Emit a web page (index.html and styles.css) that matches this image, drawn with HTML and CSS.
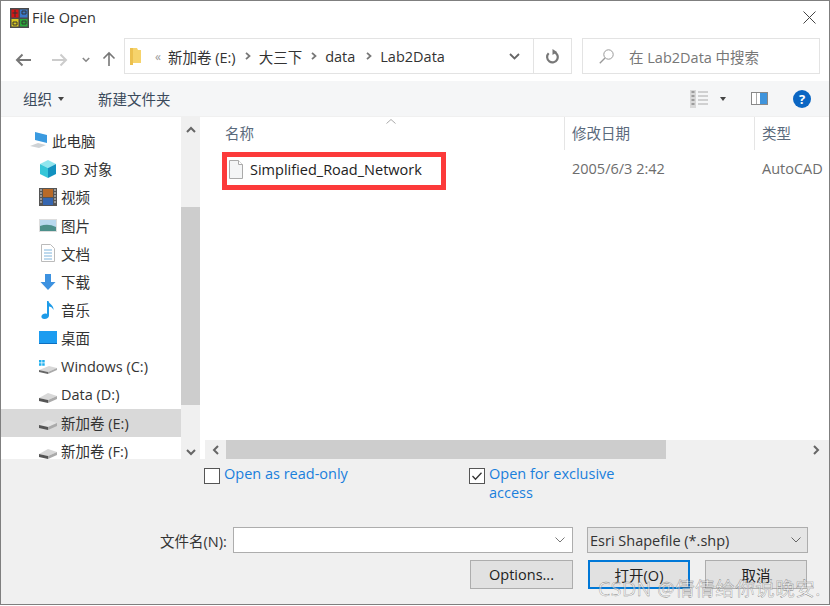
FILE: index.html
```html
<!DOCTYPE html>
<html lang="en">
<head>
    <meta charset="UTF-8">
    <meta name="viewport" content="width=device-width, initial-scale=1.0">
    <title>File Open</title>
    <link rel="stylesheet" href="styles.css">
</head>
<body>
<div class="window">
    <div class="titlebar">
        <svg class="app-icon" width="19" height="20" viewBox="0 0 19 20">
            <rect width="19" height="20" fill="#4a4a4a"/>
            <rect x="1.500" y="1.500" width="7" height="8" fill="#d81414"/>
            <rect x="10" y="1.500" width="7.500" height="8" fill="#3a78c8"/>
            <rect x="1.500" y="11" width="7" height="7.500" fill="#d8c820"/>
            <rect x="10" y="11" width="7.500" height="7.500" fill="#2aa83a"/>
            <path d="M5 2v7M2.500 5h5M3 14h4v3H3zM12 3h4v3h-4zM12 13h4v3h-4z" stroke="#333" fill="none"/>
        </svg>
        <span class="title">File Open</span>
        <svg class="close" width="13" height="13" viewBox="0 0 13 13"><path d="M.5.5l12 12M12.5.5l-12 12" stroke="#444" fill="none"/></svg>
    </div>

    <div class="navbar">
        <svg class="nav-back" width="17" height="14" viewBox="0 0 17 14"><path d="M16 7H2M7.500 1.500L2 7l5.500 5.500" stroke="#777" stroke-width="2" fill="none"/></svg>
        <svg class="nav-forward" width="17" height="14" viewBox="0 0 17 14"><path d="M1 7h14M9.500 1.500L15 7l-5.500 5.500" stroke="#ccc" stroke-width="2" fill="none"/></svg>
        <svg class="nav-down" width="8" height="6" viewBox="0 0 8 6"><path d="M.8 1l3.200 3.200L7.200 1" stroke="#888" stroke-width="1.600" fill="none"/></svg>
        <svg class="nav-up" width="14" height="15" viewBox="0 0 14 15"><path d="M7 15V2M1.500 7.500L7 2l5.500 5.500" stroke="#777" stroke-width="1.600" fill="none"/></svg>
        <div class="address">
            <svg class="folder" width="11" height="17" viewBox="0 0 11 17"><path d="M0 0h7l1 2h3v13l-9 0-2 2z" fill="#f6d36b"/><path d="M0 0h3v17H0z" fill="#ecc04e"/></svg>
            <span class="crumb-more">«</span>
            <span class="crumb">新加卷 (E:)</span>
            <svg class="crumb-sep" width="6" height="8" viewBox="0 0 6 8"><path d="M1 .8L4.500 4 1 7.200" stroke="#777" stroke-width="1.800" fill="none"/></svg>
            <span class="crumb">大三下</span>
            <svg class="crumb-sep" width="6" height="8" viewBox="0 0 6 8"><path d="M1 .8L4.500 4 1 7.200" stroke="#777" stroke-width="1.800" fill="none"/></svg>
            <span class="crumb crumb-data">data</span>
            <svg class="crumb-sep" width="6" height="8" viewBox="0 0 6 8"><path d="M1 .8L4.500 4 1 7.200" stroke="#777" stroke-width="1.800" fill="none"/></svg>
            <span class="crumb">Lab2Data</span>
            <svg class="address-drop" width="11" height="7" viewBox="0 0 11 7"><path d="M1 1l4.500 4.500L10 1" stroke="#666" stroke-width="1.800" fill="none"/></svg>
            <div class="refresh">
                <svg width="14" height="15" viewBox="0 0 14 15"><path d="M8 3a5.300 5.300 0 1 1-5.300 1.300" stroke="#777" stroke-width="2.200" fill="none"/><path d="M6.500 0v6L11 3z" fill="#777"/></svg>
            </div>
        </div>
        <div class="search">
            <svg width="15" height="15" viewBox="0 0 15 15"><circle cx="9.500" cy="5.500" r="4.700" stroke="#999" fill="none"/><path d="M6 9L.8 14.200" stroke="#999" stroke-width="1.300"/></svg>
            <span>在 Lab2Data 中搜索</span>
        </div>
    </div>

    <div class="toolbar">
        <span class="tool">组织</span>
        <span class="caret tool-caret"></span>
        <span class="tool tool-new">新建文件夹</span>
        <svg class="view-icon" width="18" height="18" viewBox="0 0 18 18">
            <rect x="0" y="0" width="6" height="18" fill="#d8d8d8"/>
            <path d="M1.500 2h3M1.500 6h3M1.500 10h3M1.500 14h3" stroke="#888" stroke-width="1.500"/>
            <path d="M8 2h10M8 6h10M8 10h10M8 14h10" stroke="#aaa"/>
        </svg>
        <span class="caret view-caret"></span>
        <svg class="pane-icon" width="17" height="13" viewBox="0 0 17 13">
            <rect x=".5" y=".5" width="16" height="12" fill="#fff" stroke="#888"/>
            <rect x="9" y="1" width="7" height="11" fill="#3f94dc"/>
            <path d="M5.500 1v11" stroke="#aaa"/>
        </svg>
        <span class="help">?</span>
    </div>

    <div class="content">
        <div class="sidebar">
            <div class="tree">
                <div class="row row-top">
                    <svg width="18" height="17" viewBox="0 0 18 17"><path d="M5 0l12 3v8L5 8z" fill="#3a9ae0"/><path d="M0 14l8-3 8 2-7 3z" fill="#cfd3d6"/></svg>
                    <span>此电脑</span>
                </div>
                <div class="row">
                    <svg width="18" height="18" viewBox="0 0 18 18"><path d="M9 0l8 4-8 4-8-4z" fill="#8fe6ee"/><path d="M1 4l8 4v10l-8-4z" fill="#35c6d8"/><path d="M17 4L9 8v10l8-4z" fill="#1292c0"/></svg>
                    <span>3D 对象</span>
                </div>
                <div class="row">
                    <svg width="18" height="18" viewBox="0 0 18 18"><rect width="18" height="18" fill="#555"/><rect x="4" y="1" width="10" height="8" fill="#b86a28"/><rect x="4" y="10" width="10" height="7" fill="#3566b0"/><path d="M1 2h2M1 5h2M1 8h2M1 11h2M1 14h2M15 2h2M15 5h2M15 8h2M15 11h2M15 14h2" stroke="#ddd"/></svg>
                    <span>视频</span>
                </div>
                <div class="row">
                    <svg width="18" height="13" viewBox="0 0 18 13"><rect width="18" height="13" fill="#ddd"/><rect x="1" y="1" width="16" height="11" fill="#b8d8ee"/><path d="M1 7q8-3 16 1v4H1z" fill="#4c8f8a"/></svg>
                    <span>图片</span>
                </div>
                <div class="row">
                    <svg width="14" height="18" viewBox="0 0 14 18"><path d="M.5.5h9l4 4v13H.5z" fill="#fff" stroke="#bbb"/><path d="M3 6h8M3 9h8M3 12h8M3 15h8" stroke="#7fb4dc"/></svg>
                    <span>文档</span>
                </div>
                <div class="row">
                    <svg width="15" height="16" viewBox="0 0 15 16"><path d="M4.500 0h6v8H15l-7.500 8L0 8h4.500z" fill="#3d92e0"/></svg>
                    <span>下载</span>
                </div>
                <div class="row">
                    <svg width="14" height="18" viewBox="0 0 14 18"><path d="M6 0h1.500c.3 3 5.500 4 5 9-1-2.500-3-3.500-4.500-3.500V14.500c0 2-2 3.500-4.500 3.500S0 16.500.5 15c.5-2 3.500-3 5.500-2z" fill="#1d9be8"/></svg>
                    <span>音乐</span>
                </div>
                <div class="row">
                    <svg width="18" height="13" viewBox="0 0 18 13"><rect width="18" height="13" fill="#1c9cf0"/><path d="M0 12.500h18" stroke="#0d6fc0"/></svg>
                    <span>桌面</span>
                </div>
                <div class="row row-latin">
                    <svg width="18" height="14" viewBox="0 0 18 14"><path d="M0 0h2.500v2.500H0zM3.200 0h2.500v2.500H3.200zM0 3.200h2.500v2.500H0zM3.200 3.200h2.500v2.500H3.200z" fill="#20b0ee"/><path d="M0 10l10-4 8 2-9 4z" fill="#d8d8d8"/><path d="M0 10l9 2v2l-9-2z" fill="#666"/><path d="M9 12l9-4v2l-9 4z" fill="#aaa"/></svg>
                    <span>Windows (C:)</span>
                </div>
                <div class="row row-latin">
                    <svg class="drive" width="18" height="11" viewBox="0 0 18 11"><path d="M0 6l9-5 9 3-9 4z" fill="#d8d8d8"/><path d="M0 6l9 2v3L0 9z" fill="#555"/><path d="M9 8l9-4v3l-9 4z" fill="#aaa"/></svg>
                    <span>Data (D:)</span>
                </div>
                <div class="row row-selected">
                    <svg class="drive" width="18" height="11" viewBox="0 0 18 11"><path d="M0 6l9-5 9 3-9 4z" fill="#e4e4e4"/><path d="M0 6l9 2v3L0 9z" fill="#555"/><path d="M9 8l9-4v3l-9 4z" fill="#aaa"/></svg>
                    <span>新加卷 (E:)</span>
                </div>
                <div class="row">
                    <svg class="drive" width="18" height="11" viewBox="0 0 18 11"><path d="M0 6l9-5 9 3-9 4z" fill="#d8d8d8"/><path d="M0 6l9 2v3L0 9z" fill="#555"/><path d="M9 8l9-4v3l-9 4z" fill="#aaa"/></svg>
                    <span>新加卷 (F:)</span>
                </div>
            </div>
            <div class="vscroll">
                <svg class="vscroll-up" width="10" height="7" viewBox="0 0 10 7"><path d="M1 6l4-4 4 4" stroke="#666" stroke-width="2" fill="none"/></svg>
                <div class="vscroll-thumb"></div>
                <svg class="vscroll-down" width="10" height="7" viewBox="0 0 10 7"><path d="M1 1l4 4 4-4" stroke="#666" stroke-width="2" fill="none"/></svg>
            </div>
        </div>

        <div class="main">
            <div class="columns">
                <div class="col col-name">名称
                    <svg class="sort" width="10" height="5" viewBox="0 0 10 5"><path d="M.5 4.500L5 .5l4.500 4" stroke="#aaa" fill="none"/></svg>
                </div>
                <div class="col col-date">修改日期</div>
                <div class="col col-type">类型</div>
            </div>
            <div class="files">
                <div class="cell-name">
                    <div class="file-mark">
                        <svg width="14" height="19" viewBox="0 0 14 19"><path d="M.5.500h9l4 4v14H.5z" fill="#f4f5f6" stroke="#aaa"/><path d="M9.500.500v4h4" fill="#fff" stroke="#aaa"/></svg>
                        <span>Simplified_Road_Network</span>
                    </div>
                </div>
                <div class="cell-date">2005/6/3 2:42</div>
                <div class="cell-type">AutoCAD</div>
            </div>
            <div class="hscroll">
                <svg class="hscroll-left" width="7" height="10" viewBox="0 0 7 10"><path d="M6 1L2 5l4 4" stroke="#666" stroke-width="2" fill="none"/></svg>
                <div class="hscroll-thumb"></div>
                <svg class="hscroll-right" width="7" height="10" viewBox="0 0 7 10"><path d="M1 1l4 4-4 4" stroke="#666" stroke-width="2" fill="none"/></svg>
            </div>
        </div>
    </div>

    <div class="panel">
        <div class="checks">
            <div class="check check-first">
                <span class="box"></span>
                <span class="check-label">Open as read-only</span>
            </div>
            <div class="check">
                <span class="box">
                    <svg width="14" height="14" viewBox="0 0 14 14"><path d="M2.500 7l3 3.200 6-6.500" stroke="#333" stroke-width="1.300" fill="none"/></svg>
                </span>
                <span class="check-label">Open for exclusive access</span>
            </div>
        </div>
        <div class="file-row">
            <label class="file-label">文件名(N):</label>
            <div class="file-input">
                <svg width="10" height="6" viewBox="0 0 10 6"><path d="M.5.500L5 5 9.500.500" stroke="#777" fill="none"/></svg>
            </div>
            <div class="file-type">
                <span>Esri Shapefile (*.shp)</span>
                <svg width="10" height="6" viewBox="0 0 10 6"><path d="M.5.500L5 5 9.500.500" stroke="#666" fill="none"/></svg>
            </div>
        </div>
        <div class="buttons">
            <button class="btn btn-options">Options...</button>
            <button class="btn btn-open">打开(O)</button>
            <button class="btn btn-cancel">取消</button>
        </div>
    </div>

    <div class="watermark">CSDN @倩倩给你说晚安.</div>
</div>
</body>
</html>
```

FILE: styles.css
```css
* {
    box-sizing: border-box;
}
html, body {
    margin: 0;
    padding: 0;
    background-color: #fff;
    overflow: hidden;
}
body {
    font-family: "Open Sans", "Noto Sans CJK SC", sans-serif;
    font-size: 14.5px;
    color: #333;
}
svg {
    display: block;
    flex: none;
}

.window {
    position: relative;
    width: 830px;
    height: 605px;
    border: 1px solid #7f7f7f;
    overflow: hidden;
    display: flex;
    flex-direction: column;
    background-color: #fff;
}

/* title bar */
.titlebar {
    height: 35px;
    flex: none;
    display: flex;
    align-items: center;
    padding: 0 13px 2px 9px;
}
.title {
    margin-left: 3px;
    color: #333;
}
.close {
    margin-left: auto;
}

/* back / forward / address / search */
.navbar {
    height: 45px;
    flex: none;
    display: flex;
    align-items: flex-start;
    padding-top: 2px;
}
.nav-back {
    margin: 15px 0 0 14px;
}
.nav-forward {
    margin: 15px 0 0 19px;
}
.nav-down {
    margin: 19px 0 0 14px;
}
.nav-up {
    margin: 13px 0 0 12px;
}
.address {
    width: 448px;
    height: 36px;
    margin-left: 8px;
    border: 1px solid #e3e3e3;
    display: flex;
    align-items: center;
    padding-left: 5px;
}
.crumb-more {
    margin-left: 14px;
    color: #999;
    font-size: 12px;
}
.crumb {
    color: #333;
}
.crumb-more + .crumb {
    margin-left: 7px;
}
.crumb-data {
    padding-right: 2px;
}
.crumb-sep {
    margin-left: 9px;
    margin-right: 1px;
}
.crumb-sep + .crumb {
    margin-left: 7px;
}
.address-drop {
    margin-left: auto;
    margin-right: 13px;
}
.refresh {
    width: 38px;
    height: 34px;
    border-left: 1px solid #e3e3e3;
    display: flex;
    align-items: center;
    justify-content: center;
}
.search {
    width: 238px;
    height: 36px;
    margin-left: 10px;
    border: 1px solid #e3e3e3;
    display: flex;
    align-items: center;
    padding-left: 16px;
    color: #777;
}
.search span {
    margin-left: 15px;
}

/* command bar */
.toolbar {
    height: 36px;
    flex: none;
    display: flex;
    align-items: center;
    background-color: #f5f6f7;
    padding: 0 18px 0 22px;
    border-bottom: 1px solid #f0f0f0;
}
.tool {
    color: #3a4a5c;
}
.caret {
    width: 0;
    height: 0;
    border-left: 3.5px solid transparent;
    border-right: 3.5px solid transparent;
    border-top: 4px solid #444;
}
.tool-caret {
    margin-left: 6px;
}
.tool-new {
    margin-left: 34px;
}
.view-icon {
    margin-left: auto;
}
.view-caret {
    margin-left: 12px;
}
.pane-icon {
    margin-left: 25px;
}
.help {
    width: 18px;
    height: 18px;
    margin-left: 25px;
    border-radius: 50%;
    background-color: #0b66c3;
    color: #fff;
    font-size: 13px;
    font-weight: bold;
    line-height: 18px;
    text-align: center;
}

/* navigation tree and file list */
.content {
    height: 342px;
    flex: none;
    display: flex;
    background-color: #fff;
}
.sidebar {
    width: 199px;
    flex: none;
    display: flex;
}
.tree {
    width: 180px;
    flex: none;
    padding-top: 10px;
    overflow: hidden;
}
.row {
    height: 28.2px;
    display: flex;
    align-items: center;
    padding: 0 0 1px 38px;
}
.row svg {
    margin-right: 4px;
    width: 18px;
}
.row .drive {
    margin-top: 5px;
}
.row-latin {
    padding-bottom: 0;
}
.row-top {
    padding-left: 29px;
}
.row-selected {
    background-color: #d9d9d9;
}
.vscroll {
    width: 19px;
    flex: none;
    background-color: #f0f0f0;
    display: flex;
    flex-direction: column;
    align-items: center;
}
.vscroll-up {
    margin-top: 9px;
}
.vscroll-thumb {
    width: 100%;
    height: 198px;
    margin-top: 74px;
    background-color: #cdcdcd;
}
.vscroll-down {
    margin-top: 44px;
}

.main {
    flex: 1;
    min-width: 0;
    margin-left: 5px;
    display: flex;
    flex-direction: column;
    overflow: hidden;
}
.columns {
    height: 33px;
    flex: none;
    display: flex;
    color: #5a6a7c;
}
.col {
    display: flex;
    align-items: center;
    height: 33px;
    padding-bottom: 2px;
}
.col-name {
    position: relative;
    width: 359px;
    padding-left: 20px;
}
.sort {
    position: absolute;
    left: 181px;
    top: 2px;
}
.col-date {
    width: 190px;
    padding-left: 7px;
    border-left: 1px solid #e5e5e5;
}
.col-type {
    flex: 1;
    padding-left: 7px;
    border-left: 1px solid #e5e5e5;
}
.files {
    flex: 1;
    display: flex;
    align-items: flex-start;
    padding-top: 2px;
    color: #6d6d6d;
}
.cell-name {
    width: 359px;
    flex: none;
    padding-left: 17px;
}
.file-mark {
    width: 224px;
    height: 38px;
    border: 5px solid #fc3a3a;
    display: flex;
    align-items: center;
    padding: 0 0 4px 2px;
    color: #222;
}
.file-mark span {
    margin-left: 7px;
    white-space: nowrap;
}
.cell-date {
    width: 190px;
    flex: none;
    padding: 7px 0 0 8px;
}
.cell-type {
    padding: 7px 0 0 8px;
    white-space: nowrap;
}
.hscroll {
    height: 19px;
    flex: none;
    display: flex;
    align-items: center;
    background-color: #f0f0f0;
}
.hscroll-left {
    margin-left: 7px;
}
.hscroll-thumb {
    width: 440px;
    height: 100%;
    margin-left: 7px;
    background-color: #cdcdcd;
}
.hscroll-right {
    margin-left: 147px;
}

/* bottom panel */
.panel {
    flex: 1;
    background-color: #f0f0f0;
    padding-left: 203px;
}
.checks {
    display: flex;
    align-items: flex-start;
    height: 68px;
    padding-top: 5px;
}
.check {
    display: flex;
    align-items: flex-start;
    width: 150px;
}
.check-first {
    width: 265px;
}
.box {
    width: 16px;
    height: 16px;
    margin-top: 4px;
    flex: none;
    background-color: #fff;
    border: 1px solid #555;
    display: flex;
    align-items: center;
    justify-content: center;
}
.check-label {
    margin-left: 4px;
    color: #1a7fdc;
    line-height: 19px;
}
.file-row {
    display: flex;
    align-items: center;
    margin-left: -44px;
    height: 26px;
}
.file-label {
    width: 73px;
    color: #333;
}
.file-input {
    width: 340px;
    height: 26px;
    background-color: #fff;
    border: 1px solid #adadad;
    display: flex;
    align-items: center;
    justify-content: flex-end;
    padding-right: 7px;
}
.file-type {
    width: 221px;
    height: 26px;
    margin-left: 14px;
    background-color: #e5e5e5;
    border: 1px solid #adadad;
    display: flex;
    align-items: center;
    justify-content: space-between;
    padding: 0 6px 0 2px;
}
.buttons {
    display: flex;
    margin: 7px 0 0 266px;
}
.btn {
    width: 103px;
    height: 29px;
    padding: 0;
    background-color: #e1e1e1;
    border: 1px solid #adadad;
    font-family: inherit;
    font-size: 14.5px;
    color: #222;
}
.btn-open {
    width: 102px;
    margin-left: 15px;
    border: 2px solid #0078d7;
}
.btn-cancel {
    width: 102px;
    margin-left: 15px;
}

/* site watermark, lies over the buttons */
.watermark {
    position: absolute;
    left: 597px;
    top: 572px;
    font-size: 19.5px;
    letter-spacing: 0.5px;
    white-space: nowrap;
    color: rgba(255, 255, 255, 0.5);
    -webkit-text-stroke: 0.35px rgba(90, 90, 90, 0.8);
}
```
